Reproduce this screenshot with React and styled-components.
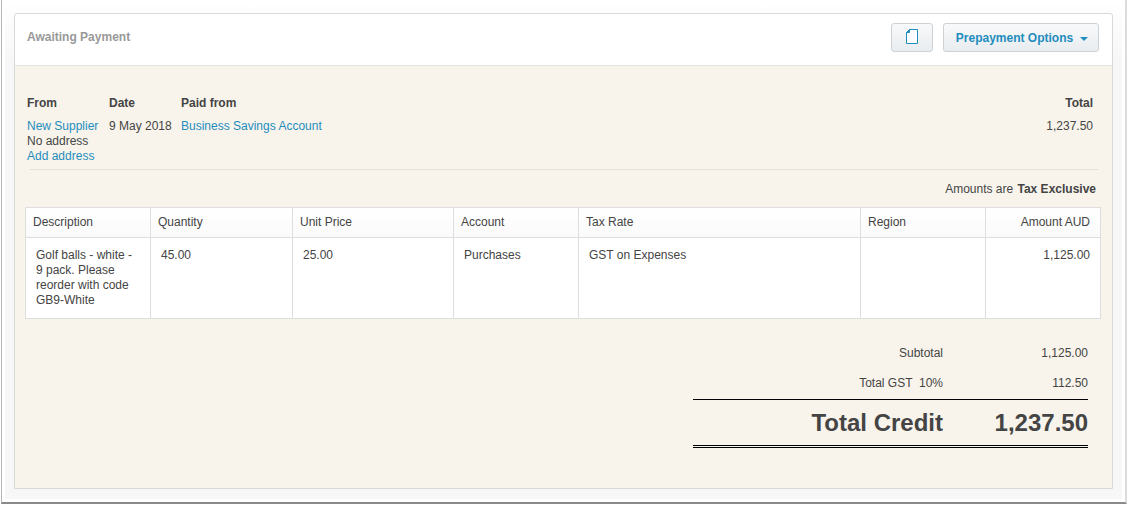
import React from 'react';
import styled, { createGlobalStyle } from 'styled-components';

const Global = createGlobalStyle`
  html, body { margin: 0; padding: 0; background: #fff; }
  body { font-family: "Liberation Sans", Arial, sans-serif; font-size: 12px; color: #444; }
`;

const Frame = styled.div`
  box-sizing: border-box;
  width: 1126px;
  height: 504px;
  margin-left: 1px;
  padding: 13px 12px 0 12px;
  background: linear-gradient(#fff, #f7f7f7 60px);
  box-shadow: inset 0 0 0 3px #fff;
  border-left: 1px solid #b5b5b5;
  border-right: 2px solid #dcdcdc;
  border-bottom: 2px solid #8a8a8a;
  overflow: hidden;
`;

const Card = styled.section`
  box-sizing: border-box;
  height: 476px;
  display: flex;
  flex-direction: column;
  border: 1px solid #d9d9d9;
  border-radius: 3px 3px 0 0;
  background: #f8f4ec;
`;

const CardHeader = styled.header`
  box-sizing: border-box;
  height: 52px;
  flex: none;
  display: flex;
  align-items: center;
  gap: 10px;
  padding: 0 13px 0 12px;
  background: #fff;
  border-bottom: 1px solid #e4e4e4;
  border-radius: 3px 3px 0 0;
`;

const Status = styled.h2`
  margin: 0 auto 0 0;
  position: relative;
  top: -3px;
  font-size: 12px;
  font-weight: 700;
  color: #999;
`;

const Button = styled.button`
  box-sizing: border-box;
  height: 29px;
  padding: 0 0 0 ${p => p.$pad}px;
  width: ${p => p.$w}px;
  display: flex;
  align-items: center;
  justify-content: center;
  gap: 7px;
  position: relative;
  top: -2px;
  font: 700 12px "Liberation Sans", Arial, sans-serif;
  color: #1f8dbd;
  border: 1px solid #ccd2d6;
  border-radius: 3px;
  background: linear-gradient(#f8f9fa, #e9edf0);
`;

const Caret = styled.span`
  width: 0;
  height: 0;
  border-left: 4px solid transparent;
  border-right: 4px solid transparent;
  border-top: 4px solid #1f8dbd;
  margin-top: 2px;
`;

const Content = styled.div`
  flex: 1;
  display: flex;
  flex-direction: column;
  padding: 30px 10px 0 10px;
`;

const Meta = styled.div`
  display: flex;
  padding: 0 9px 5px 2px;
  line-height: 15px;
`;

const MetaCol = styled.div`
  width: ${p => (p.$w ? `${p.$w}px` : 'auto')};
  flex: ${p => (p.$grow ? 1 : 'none')};
  text-align: ${p => (p.$right ? 'right' : 'left')};
`;

const MetaLabel = styled.div`
  font-weight: 700;
  height: 15px;
  margin-bottom: 8px;
`;

const LinkText = styled.a`
  display: block;
  color: #1f8dbd;
  text-decoration: none;
`;

const Divider = styled.hr`
  margin: 0 4px 0 5px;
  border: 0;
  border-top: 1px solid #e5e1da;
`;

const TaxNote = styled.div`
  text-align: right;
  line-height: 15px;
  margin: 12px 6px 10px 0;
  b { margin-left: 1px; }
`;

const Table = styled.table`
  width: 1075px;
  table-layout: fixed;
  border-collapse: collapse;
  background: #fff;
  flex: none;
`;

const Th = styled.th`
  box-sizing: border-box;
  height: 30px;
  padding: 0 7px 1px;
  font-weight: 400;
  text-align: ${p => (p.$right ? 'right' : 'left')};
  padding-right: ${p => (p.$right ? '10px' : '7px')};
  border: 1px solid #dedede;
  background: linear-gradient(#fff, #fafafa);
`;

const Td = styled.td`
  box-sizing: border-box;
  height: 81px;
  padding: 10px 10px 0;
  vertical-align: top;
  line-height: 15px;
  text-align: ${p => (p.$right ? 'right' : 'left')};
  border: 1px solid #dedede;
`;

const Totals = styled.div`
  width: 395px;
  align-self: flex-end;
  margin: 19px 14px 0 0;
`;

const TotalRow = styled.div`
  display: flex;
  justify-content: flex-end;
  height: 30px;
  line-height: 30px;
`;

const TotalLabel = styled.span`
  white-space: pre;
`;

const TotalValue = styled.span`
  width: 145px;
  text-align: right;
`;

const GrandRow = styled.div`
  display: flex;
  justify-content: flex-end;
  box-sizing: border-box;
  height: 49px;
  line-height: 45px;
  font-size: 24px;
  font-weight: 700;
  border-top: 1px solid #000;
  border-bottom: 3px double #000;
  margin-top: 1px;
`;

const IconSvg = styled.svg`
  margin-bottom: 2px;
`;

const DocIcon = () => (
  <IconSvg width="12" height="15" viewBox="0 0 12 15" fill="none">
    <path d="M3.5 .5 H11.5 V14.5 H.5 V3.5 Z" stroke="#1f8dbd" fill="#fff" />
    <path d="M3.5 .5 V3.5 H.5 Z" fill="#1f8dbd" stroke="#1f8dbd" />
  </IconSvg>
);

const columns = [125, 142, 161, 125, 282, 125, 115];

export default function App() {
  return (
    <>
      <Global />
      <Frame>
        <Card>
          <CardHeader>
            <Status>Awaiting Payment</Status>
            <Button $w={42} $pad={0} aria-label="Copy"><DocIcon /></Button>
            <Button $w={156} $pad={2}>Prepayment Options <Caret /></Button>
          </CardHeader>
          <Content>
            <Meta>
              <MetaCol $w={82}>
                <MetaLabel>From</MetaLabel>
                <LinkText href="#">New Supplier</LinkText>
                No address
                <LinkText href="#">Add address</LinkText>
              </MetaCol>
              <MetaCol $w={72}>
                <MetaLabel>Date</MetaLabel>
                9 May 2018
              </MetaCol>
              <MetaCol $grow>
                <MetaLabel>Paid from</MetaLabel>
                <LinkText href="#">Business Savings Account</LinkText>
              </MetaCol>
              <MetaCol $right>
                <MetaLabel>Total</MetaLabel>
                1,237.50
              </MetaCol>
            </Meta>
            <Divider />
            <TaxNote>Amounts are <b>Tax Exclusive</b></TaxNote>
            <Table>
              <colgroup>
                {columns.map((w, i) => <col key={i} width={w} />)}
              </colgroup>
              <thead>
                <tr>
                  <Th>Description</Th>
                  <Th>Quantity</Th>
                  <Th>Unit Price</Th>
                  <Th>Account</Th>
                  <Th>Tax Rate</Th>
                  <Th>Region</Th>
                  <Th $right>Amount AUD</Th>
                </tr>
              </thead>
              <tbody>
                <tr>
                  <Td>Golf balls - white - 9 pack. Please reorder with code GB9-White</Td>
                  <Td>45.00</Td>
                  <Td>25.00</Td>
                  <Td>Purchases</Td>
                  <Td>GST on Expenses</Td>
                  <Td />
                  <Td $right>1,125.00</Td>
                </tr>
              </tbody>
            </Table>
            <Totals>
              <TotalRow>
                <TotalLabel>Subtotal</TotalLabel>
                <TotalValue>1,125.00</TotalValue>
              </TotalRow>
              <TotalRow>
                <TotalLabel>Total GST  10%</TotalLabel>
                <TotalValue>112.50</TotalValue>
              </TotalRow>
              <GrandRow>
                <TotalLabel>Total Credit</TotalLabel>
                <TotalValue>1,237.50</TotalValue>
              </GrandRow>
            </Totals>
          </Content>
        </Card>
      </Frame>
    </>
  );
}
